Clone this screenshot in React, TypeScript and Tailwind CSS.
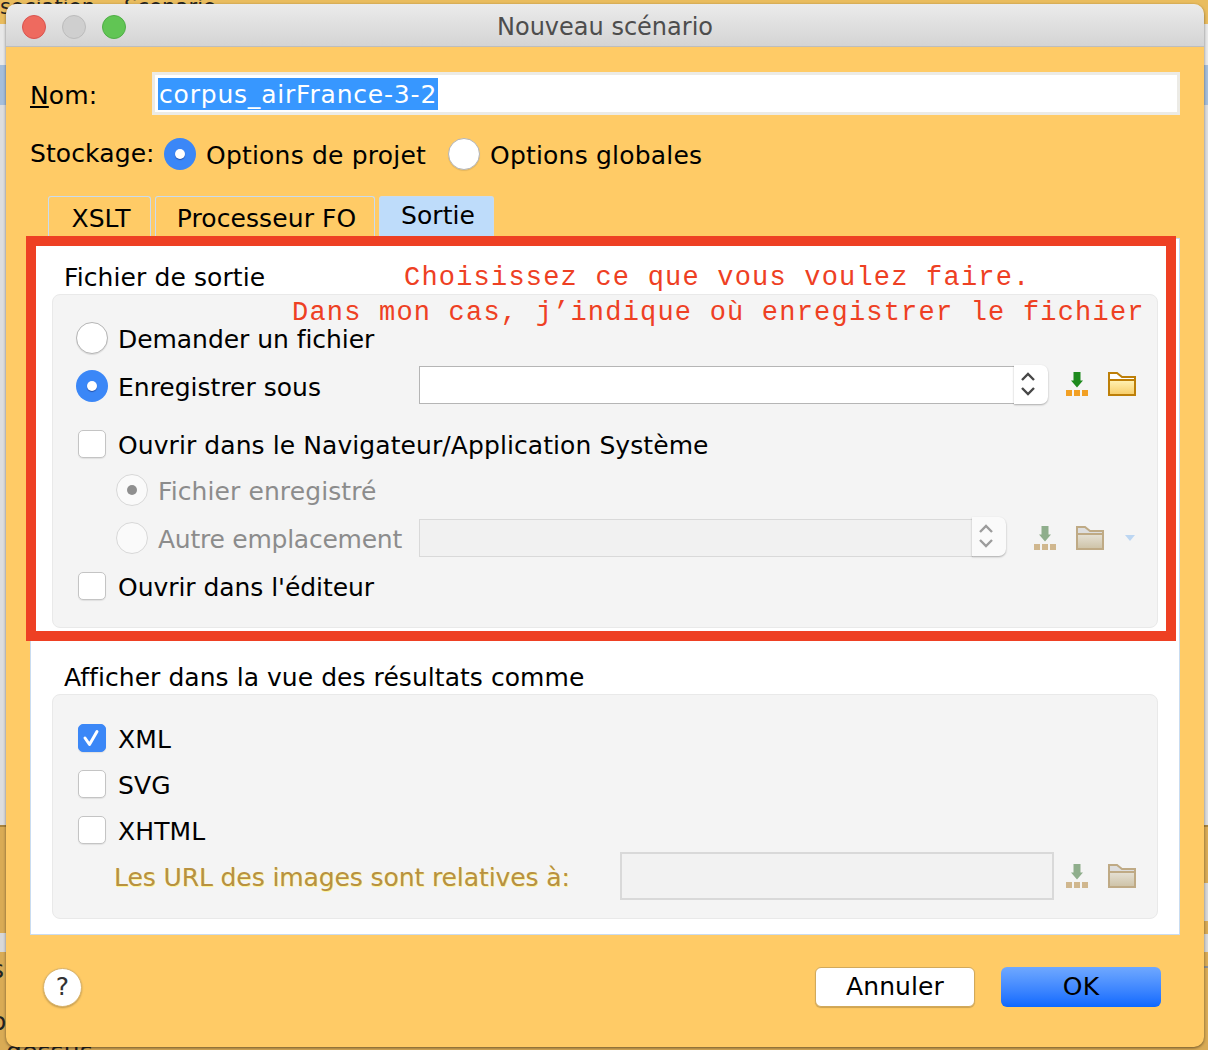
import type { ReactNode } from "react";

const ui = "font-['DejaVu_Sans',sans-serif]";

function Radio({ checked, disabled }: { checked?: boolean; disabled?: boolean }) {
  if (disabled) {
    return (
      <span className="flex h-8 w-8 shrink-0 items-center justify-center rounded-full border border-[#d8d8d8] bg-[#fafafa]">
        {checked && <span className="h-[10px] w-[10px] rounded-full bg-[#8f8f8f]" />}
      </span>
    );
  }
  if (checked) {
    return (
      <span className="flex h-8 w-8 shrink-0 items-center justify-center rounded-full bg-[#3b87f7]">
        <span className="h-[10px] w-[10px] rounded-full bg-white shadow-[0_1px_1px_rgba(0,0,60,0.4)]" />
      </span>
    );
  }
  return <span className="h-8 w-8 shrink-0 rounded-full border border-[#b5b5b5] bg-white shadow-[0_1px_1px_rgba(0,0,0,0.1)]" />;
}

function Checkbox({ checked }: { checked?: boolean }) {
  return (
    <span className="mx-[2px] flex h-7 w-7 shrink-0 items-center justify-center rounded-[5px] border border-[#c4c4c4] bg-white shadow-[0_1px_1px_rgba(0,0,0,0.08)] data-[on=true]:border-[#3b87f7] data-[on=true]:bg-[#3b87f7]" data-on={checked ? "true" : "false"}>
      {checked && (
        <svg width="20" height="20" viewBox="0 0 20 20" fill="none">
          <path d="M3 10l4.500 6.500L15 3.500" stroke="white" strokeWidth="3" strokeLinecap="round" strokeLinejoin="round" />
        </svg>
      )}
    </span>
  );
}

function SaveIcon({ muted }: { muted?: boolean }) {
  const arrow = muted ? "#8fae8c" : "#1d8a1d";
  const dot = muted ? "#d0b78e" : "#f2a024";
  return (
    <svg width="24" height="24" viewBox="0 0 24 24" className="block shrink-0">
      <path d="M8.500 0h7v8.500H18l-6 7-6-7h2.500z" fill={arrow} />
      <rect x="1" y="18" width="6" height="6" fill={dot} />
      <rect x="9" y="18" width="6" height="6" fill={dot} />
      <rect x="17" y="18" width="6" height="6" fill={dot} />
    </svg>
  );
}

function FolderIcon({ muted }: { muted?: boolean }) {
  const id = muted ? "folderMuted" : "folderOn";
  return (
    <svg width="28" height="24" viewBox="0 0 28 24" className="block shrink-0">
      <defs>
        <linearGradient id={id} x1="0" y1="0" x2="0" y2="1">
          <stop offset="0" stopColor={muted ? "#e4dfd2" : "#fff0b0"} />
          <stop offset="1" stopColor={muted ? "#cfc4a9" : "#f8cf6c"} />
        </linearGradient>
      </defs>
      <path d="M1 1h8l5 4h13v18H1z" fill={muted ? "#dedede" : "#ffffff"} stroke={muted ? "#bfaa85" : "#bd7f08"} strokeWidth="2" />
      <path d="M2 9h24v13H2z" fill={`url(#${id})`} />
      <path d="M1 8h26" stroke={muted ? "#bfaa85" : "#bd7f08"} strokeWidth="2" />
    </svg>
  );
}

function Spinner({ muted }: { muted?: boolean }) {
  const color = muted ? "#9c9c9c" : "#474747";
  return (
    <span className={`-ml-px mb-[4px] flex h-[39px] w-[34px] shrink-0 items-center justify-center rounded-r-[7px] pr-[7px] shadow-[0_1px_2px_rgba(0,0,0,0.3)] ${muted ? "bg-[#fafafa]" : "bg-white"}`}>
      <svg width="16" height="26" viewBox="0 0 16 26" fill="none" stroke={color} strokeWidth="2.4">
        <path d="M2 9l6-6 6 6" />
        <path d="M2 17l6 6 6-6" />
      </svg>
    </span>
  );
}

function Row({ children, className = "" }: { children: ReactNode; className?: string }) {
  return <div className={`flex items-center ${className}`}>{children}</div>;
}

function Tab({ label, active, width }: { label: string; active?: boolean; width: string }) {
  return (
    <div className={`flex h-[42px] items-center justify-center rounded-t-[3px] border border-b-0 border-[#c9dcf0] pl-[3px] ${width} ${active ? "bg-[#bedcfa] pb-[4px]" : "bg-[#ffcb66] pt-[2px]"}`}>
      {label}
    </div>
  );
}

export default function App() {
  return (
    <div className={`relative h-[1050px] w-[1208px] overflow-hidden bg-[#d9ab55] text-[25px] leading-8 tracking-[0.1px] text-black ${ui}`}>
      {/* window behind the dialog */}
      <div className="flex justify-between">
        <div className="flex w-[6px] flex-col">
          <div className="h-[24px] bg-[#e9bc5e]" />
          <div className="h-[41px] bg-[#e8e8e8]" />
          <div className="h-[40px] bg-[#a5bedb]" />
          <div className="h-[720px] bg-[#dddddd]" />
          <div className="h-[2px] bg-[#a8843f]" />
          <div className="h-[106px]" />
          <div className="h-[19px] bg-[#d8d8d8]" />
        </div>
        <div className="flex w-[5px] flex-col">
          <div className="h-[24px] bg-[#e9bc5e]" />
          <div className="h-[41px] bg-[#e8e8e8]" />
          <div className="h-[40px] bg-[#a5bedb]" />
          <div className="h-[720px] bg-[#dddddd]" />
          <div className="h-[2px] bg-[#a8843f]" />
          <div className="h-[56px]" />
          <div className="h-[38px] bg-[#d8d8d8]" />
          <div className="h-[13px]" />
          <div className="h-[18px] bg-[#d8d8d8]" />
          <div className="mt-[14px] h-[2px] bg-[#8d8d8d]" />
        </div>
      </div>
      <div className="absolute left-0 right-0 top-0 h-[24px] bg-[#e9bc5e]" />
      <div className="absolute left-0 top-[-9px] text-[21px] text-[#222]">sociation</div>
      <div className="absolute left-[124px] top-[-9px] text-[21px] text-[#222]">Scenario</div>
      <div className="absolute left-[-9px] top-[954px] text-[#222]">s</div>
      <div className="absolute left-[-9px] top-[1006px] text-[#222]">o</div>
      <div className="absolute left-[6px] top-[1036px] text-[#222]">dessus</div>

      <div className="absolute left-[6px] top-[4px] flex h-[1043px] w-[1198px] flex-col overflow-hidden rounded-[10px] bg-[#ffcb66] shadow-[0_1px_3px_rgba(0,0,0,0.5)]">
        <div className="relative flex h-[43px] shrink-0 items-center justify-center border-b border-[#bdbdbd] bg-gradient-to-b from-[#ebebeb] to-[#d4d4d4] pt-[3px] text-[24px] tracking-normal text-[#4d4d4d]">
          <div className="absolute left-[16px] flex gap-[16px]">
            <span className="h-6 w-6 rounded-full border border-[#d9534f] bg-[#ee6a5f]" />
            <span className="h-6 w-6 rounded-full border border-[#bcbcbc] bg-[#cfcfcf]" />
            <span className="h-6 w-6 rounded-full border border-[#4fae46] bg-[#61c554]" />
          </div>
          Nouveau scénario
        </div>

        <div className="flex flex-1 flex-col px-[24px] pt-[25px]">
          <Row>
            <div className="mt-[5px] w-[122px]">
              <span className="underline">N</span>om:
            </div>
            <div className="flex h-[43px] w-[1028px] items-center border-[3px] border-[#ecebe6] bg-white pl-[3px]">
              <span className="mt-[1px] h-8 bg-[#3797ff] px-px pt-[1px] leading-[32px] tracking-[0.8px] text-white">corpus_airFrance-3-2</span>
            </div>
          </Row>

          <Row className="mt-[23px] h-8">
            <div className="w-[134px]">Stockage:</div>
            <Radio checked />
            <span className="ml-[10px] w-[242px] pt-[4px] tracking-[0.2px]">Options de projet</span>
            <Radio />
            <span className="ml-[10px] pt-[4px] tracking-[0.2px]">Options globales</span>
          </Row>

          <div className="relative mt-[26px] flex-1">
            <div className="ml-[18px] flex gap-[4px]">
              <Tab label="XSLT" width="w-[103px]" />
              <Tab label="Processeur FO" width="w-[220px]" />
              <Tab label="Sortie" width="w-[115px]" active />
            </div>

            <div className="flex h-[697px] w-[1150px] flex-col border border-[#c9dcf0] bg-white px-[21px]">
              <div className="mt-[22px] h-[33px] pl-[12px] pt-[1px]">Fichier de sortie</div>
              <div className="h-[334px] shrink-0 rounded-[8px] border border-[#e9e9e9] bg-[#f4f4f4] pl-[23px] pr-[20px] pt-[27px]">
                <Row className="h-8">
                  <Radio />
                  <span className="ml-[10px] pt-[4px] tracking-[-0.05px]">Demander un fichier</span>
                </Row>
                <Row className="mt-[12px] h-10">
                  <Radio checked />
                  <span className="ml-[10px] w-[301px] pt-[4px] tracking-normal">Enregistrer sous</span>
                  <div className="mb-[2px] h-[38px] w-[596px] border border-[#b5b5b5] bg-white" />
                  <Spinner />
                  <span className="mb-[4px] ml-[17px]"><SaveIcon /></span>
                  <span className="mb-[4px] ml-[19px]"><FolderIcon /></span>
                </Row>
                <Row className="mt-[22px] h-8">
                  <Checkbox />
                  <span className="ml-[10px] pt-[4px] tracking-[0.08px]">Ouvrir dans le Navigateur/Application Système</span>
                </Row>
                <Row className="mt-[14px] h-8 pl-[40px] text-[#8c8c8c]">
                  <Radio checked disabled />
                  <span className="ml-[10px] pt-[4px]">Fichier enregistré</span>
                </Row>
                <Row className="mt-[12px] h-10 pl-[40px] text-[#8c8c8c]">
                  <Radio disabled />
                  <span className="ml-[10px] w-[261px] pt-[4px] tracking-[-0.25px]">Autre emplacement</span>
                  <div className="h-[38px] w-[554px] border border-[#d9d9d9] bg-[#f1f1f1]" />
                  <Spinner muted />
                  <span className="ml-[27px]"><SaveIcon muted /></span>
                  <span className="ml-[19px]"><FolderIcon muted /></span>
                  <span className="ml-[21px] h-0 w-0 border-x-[5px] border-t-[6px] border-x-transparent border-t-[#bcd6f2]" />
                </Row>
                <Row className="mt-[12px] h-8">
                  <Checkbox />
                  <span className="ml-[10px] pt-[4px] tracking-[-0.05px]">Ouvrir dans l'éditeur</span>
                </Row>
              </div>

              <div className="mt-[33px] h-[33px] pl-[12px] pt-[1px] tracking-[0.05px]">Afficher dans la vue des résultats comme</div>
              <div className="h-[225px] shrink-0 rounded-[8px] border border-[#e9e9e9] bg-[#f4f4f4] pl-[23px] pr-[20px] pt-[27px]">
                <Row className="h-8">
                  <Checkbox checked />
                  <span className="ml-[10px] pt-[4px]">XML</span>
                </Row>
                <Row className="mt-[14px] h-8">
                  <Checkbox />
                  <span className="ml-[10px] pt-[4px]">SVG</span>
                </Row>
                <Row className="mt-[14px] h-8">
                  <Checkbox />
                  <span className="ml-[10px] pt-[4px]">XHTML</span>
                </Row>
                <Row className="mt-[6px] h-12 pl-[38px]">
                  <span className="w-[506px] pt-[4px] tracking-[-0.1px] text-[#b89140] [text-shadow:1px_1px_0_#fff59a]">Les URL des images sont relatives à:</span>
                  <div className="h-[48px] w-[434px] border-[2px] border-[#d9d9d9] bg-[#f2f2f2]" />
                  <span className="ml-[11px]"><SaveIcon muted /></span>
                  <span className="ml-[19px]"><FolderIcon muted /></span>
                </Row>
              </div>
            </div>

            {/* annotation drawn over the dialog */}
            <div className="absolute left-[-4px] top-[40px] h-[405px] w-[1150px] border-[10px] border-[#ee4023]" />
            <div className="absolute left-[374px] top-[66px] whitespace-pre font-['Liberation_Mono',monospace] text-[27px] tracking-[1.2px] text-[#ee4023]">Choisissez ce que vous voulez faire.</div>
            <div className="absolute left-[262px] top-[101px] whitespace-pre font-['Liberation_Mono',monospace] text-[27px] tracking-[1.2px] text-[#ee4023]">Dans mon cas, j’indique où enregistrer le fichier</div>
          </div>

          <div className="flex h-[112px] shrink-0 items-center pb-[8px]">
            <div className="ml-[13px] flex h-[39px] w-[39px] items-center justify-center rounded-full border border-[#d9b36a] bg-white text-[#333] shadow-[0_1px_2px_rgba(0,0,0,0.25)]">?</div>
            <div className="ml-auto flex gap-[26px] pr-[19px]">
              <div className="flex h-[40px] w-[160px] items-center justify-center rounded-[6px] border border-[#d2a95a] bg-white shadow-[0_1px_1px_rgba(0,0,0,0.2)]">Annuler</div>
              <div className="flex h-[40px] w-[160px] items-center justify-center rounded-[6px] bg-gradient-to-b from-[#6fa8ff] to-[#0a68ff]">OK</div>
            </div>
          </div>
        </div>
      </div>
    </div>
  );
}
